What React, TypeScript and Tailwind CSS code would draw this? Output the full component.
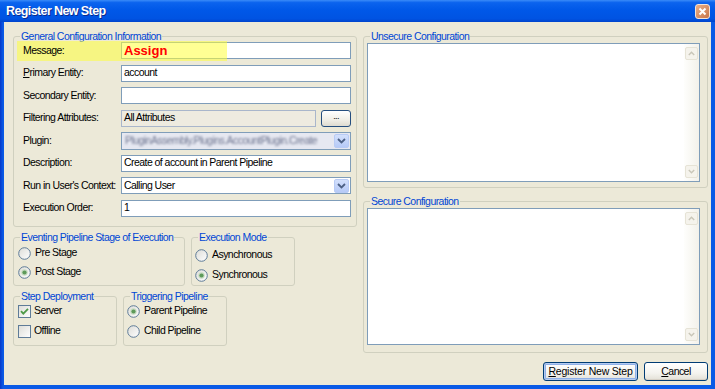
import React from "react";

const Radio = ({ checked }: { checked?: boolean }) => (
  <svg width="13" height="13" viewBox="0 0 13 13" className="shrink-0">
    <defs>
      <linearGradient id="rbg" x1="0" y1="0" x2="1" y2="1">
        <stop offset="0" stopColor="#DCDCD7" />
        <stop offset="1" stopColor="#FFFFFF" />
      </linearGradient>
    </defs>
    <circle cx="6.5" cy="6.5" r="5.8" fill="url(#rbg)" stroke="#5F7C98" strokeWidth="1" />
    {checked && (
      <>
        <circle cx="6.5" cy="6.5" r="3.2" fill="#C7DCC2" />
        <circle cx="6.5" cy="6.5" r="2.1" fill="#5E9A5A" />
      </>
    )}
  </svg>
);

const Check = ({ checked }: { checked?: boolean }) => (
  <svg width="13" height="13" viewBox="0 0 13 13" className="shrink-0">
    <defs>
      <linearGradient id="cbg" x1="0" y1="0" x2="1" y2="1">
        <stop offset="0" stopColor="#DCDCD7" />
        <stop offset="1" stopColor="#FFFFFF" />
      </linearGradient>
    </defs>
    <rect x="0.5" y="0.5" width="12" height="12" fill="url(#cbg)" stroke="#5F7C98" />
    {checked && (
      <path d="M3 6.2 L5.3 8.6 L10 3.8" fill="none" stroke="#4E9A48" strokeWidth="1.8" />
    )}
  </svg>
);

const DropBtn = () => (
  <div className="w-[15px] h-[14px] mr-[1px] rounded-[2px] border border-[#B8CBF5] bg-[linear-gradient(to_bottom,#D3E0FC,#B6CAF7)] flex items-center justify-center shrink-0">
    <svg width="9" height="6" viewBox="0 0 9 6">
      <path d="M1 1 L4.5 4.5 L8 1" fill="none" stroke="#4D6185" strokeWidth="1.8" />
    </svg>
  </div>
);

const ArrowBox = ({ up }: { up?: boolean }) => (
  <div className="w-[13px] h-[13px] rounded-[2px] border border-[#E6E3D6] bg-[#F5F3EC] flex items-center justify-center">
    <svg width="7" height="5" viewBox="0 0 7 5">
      <path d={up ? "M0.8 4 L3.5 1.2 L6.2 4" : "M0.8 1 L3.5 3.8 L6.2 1"} fill="none" stroke="#C9C6B8" strokeWidth="1.4" />
    </svg>
  </div>
);

const TextArea = ({ h }: { h: string }) => (
  <div className={`${h} w-[333px] border border-[#7F9DB9] bg-white flex justify-end`}>
    <div className="w-[15px] h-full flex flex-col justify-between items-center py-[3px] bg-[linear-gradient(to_right,#FEFEFC,#F3F1EA)]">
      <ArrowBox up />
      <ArrowBox />
    </div>
  </div>
);

const Group = ({
  title,
  className = "",
  inner = "",
  children,
}: {
  title: string;
  className?: string;
  inner?: string;
  children: React.ReactNode;
}) => (
  <fieldset className={`border border-[#D0D0BF] rounded-[3px] min-w-0 ${className}`}>
    <legend className="ml-[6px] px-[1px] text-[#0046D5] leading-[11px]">{title}</legend>
    <div className={inner}>{children}</div>
  </fieldset>
);

const Row = ({ label, children }: { label: React.ReactNode; children: React.ReactNode }) => (
  <div className="relative flex items-center h-[17px]">
    <div className="w-[98px] shrink-0 relative z-10">{label}</div>
    {children}
  </div>
);

const Box = ({ children, w = "w-[230px]" }: { children?: React.ReactNode; w?: string }) => (
  <div className={`${w} h-[17px] border border-[#7F9DB9] bg-white flex items-center px-[2px] whitespace-nowrap`}>
    {children}
  </div>
);

const Opt = ({ children, gap = "gap-[4px]" }: { children: React.ReactNode; gap?: string }) => (
  <div className={`flex items-center h-[16px] ${gap}`}>{children}</div>
);

const XPButton = ({ children, w, def }: { children: React.ReactNode; w: string; def?: boolean }) => (
  <div
    className={`${w} h-[19px] rounded-[3px] border border-[#003C74] flex items-center justify-center bg-[linear-gradient(to_bottom,#FFFFFF,#F4F3EE_60%,#E3E0D6)] ${
      def ? "shadow-[inset_0_0_0_1px_#B4CBF0,inset_0_0_0_2px_#8FB0E8]" : "shadow-[inset_0_-1px_0_#D6D0C5]"
    }`}
  >
    {children}
  </div>
);

export default function App() {
  return (
    <div className="w-[715px] h-[389px] flex flex-col bg-[#0A54E0] font-['Liberation_Sans',Arial,sans-serif] text-[10.5px] tracking-[-0.55px] text-black overflow-hidden">
      {/* Title bar */}
      <div className="h-[22px] shrink-0 flex items-center justify-between pl-[6px] pr-[5px] bg-[linear-gradient(to_bottom,#3A8BF8_0%,#0B63EE_12%,#0058E8_45%,#0053E2_85%,#0044CC_100%)]">
        <span className="text-white font-bold text-[12.5px] tracking-[-0.6px] [text-shadow:1px_1px_0_#0A2A8E]">
          Register New Step
        </span>
        <div className="w-[15px] h-[15px] rounded-[3px] border border-[#F4E3D6] bg-[linear-gradient(135deg,#E9AF88,#C9764A)] flex items-center justify-center">
          <svg width="9" height="9" viewBox="0 0 9 9">
            <path d="M1.5 1.5 L7.5 7.5 M7.5 1.5 L1.5 7.5" stroke="white" strokeWidth="2" />
          </svg>
        </div>
      </div>

      {/* Frame + client */}
      <div className="flex-1 flex pl-[4px] pr-[4px] pb-[4px] bg-[linear-gradient(to_right,#0838C8,#0A5AE6_3px,#0A5AE6)]">
        <div className="flex-1 bg-[#ECE9D8] flex pt-[9px] pl-[9px] pr-[3px] gap-[6px]">
          {/* Left column */}
          <div className="w-[344px] flex flex-col">
            <Group title="General Configuration Information" inner="pl-[9px] pr-[5px] pb-[9px] flex flex-col gap-[5.5px]">
              <Row label="Message:">
                <div className="absolute left-[-6px] top-[-1px] w-[210px] h-[20px] bg-[rgba(255,255,60,0.55)] pointer-events-none z-[5]" />
                <Box>
                  <span className="relative z-10 text-[#FF0000] font-bold text-[13px] tracking-[0px] leading-none">Assign</span>
                </Box>
              </Row>
              <Row
                label={
                  <span>
                    <span className="underline">P</span>rimary Entity:
                  </span>
                }
              >
                <Box>account</Box>
              </Row>
              <Row label="Secondary Entity:">
                <Box />
              </Row>
              <Row label="Filtering Attributes:">
                <div className="w-[196px] h-[17px] border border-[#A9B6CB] bg-[#EEEBE0] flex items-center px-[2px]">
                  All Attributes
                </div>
                <div className="ml-[5px] w-[30px] h-[17px] rounded-[3px] border border-[#254E7F] bg-[linear-gradient(to_bottom,#FFFFFF,#F0EEE6_60%,#DEDBD0)] flex items-center justify-center text-[9px] leading-none pb-[3px]">
                  ...
                </div>
              </Row>
              <Row label="Plugin:">
                <div className="w-[230px] h-[18px] border border-[#7F9DB9] bg-[#E6E8F1] flex items-center overflow-hidden">
                  <span className="flex-1 px-[3px] whitespace-nowrap overflow-hidden text-[#6E7590] blur-[1.3px]">
                    PluginAssembly.Plugins.AccountPlugin.Create
                  </span>
                  <DropBtn />
                </div>
              </Row>
              <Row label="Description:">
                <Box>Create of account in Parent Pipeline</Box>
              </Row>
              <Row label="Run in User's Context:">
                <div className="w-[230px] h-[17px] border border-[#7F9DB9] bg-white flex items-center">
                  <span className="flex-1 px-[2px]">Calling User</span>
                  <DropBtn />
                </div>
              </Row>
              <Row label="Execution Order:">
                <Box w="w-[232px]">1</Box>
              </Row>
            </Group>

            <div className="flex gap-[6px] mt-[5px]">
              <Group title="Eventing Pipeline Stage of Execution" className="w-[172px]" inner="pl-[4px] pt-[2.5px] pb-[5px] flex flex-col gap-[3px]">
                <Opt>
                  <Radio />
                  Pre Stage
                </Opt>
                <Opt>
                  <Radio checked />
                  Post Stage
                </Opt>
              </Group>
              <Group title="Execution Mode" className="w-[104px]" inner="pl-[3px] pt-[4.5px] flex flex-col gap-[4px]">
                <Opt>
                  <Radio />
                  Asynchronous
                </Opt>
                <Opt>
                  <Radio checked />
                  Synchronous
                </Opt>
              </Group>
            </div>

            <div className="flex gap-[6px] mt-[5px]">
              <Group title="Step Deployment" className="w-[104px]" inner="pl-[4px] pt-[1px] pb-[6px] flex flex-col gap-[4px]">
                <Opt gap="gap-[3px]">
                  <Check checked />
                  Server
                </Opt>
                <Opt gap="gap-[3px]">
                  <Check />
                  Offline
                </Opt>
              </Group>
              <Group title="Triggering Pipeline" className="w-[104px]" inner="pl-[3px] pt-[1px] pb-[6px] flex flex-col gap-[4px]">
                <Opt>
                  <Radio checked />
                  Parent Pipeline
                </Opt>
                <Opt>
                  <Radio />
                  Child Pipeline
                </Opt>
              </Group>
            </div>
          </div>

          {/* Right column */}
          <div className="w-[345px] flex flex-col">
            <Group title="Unsecure Configuration" inner="pl-[3px] pt-[1px] pb-[5px]">
              <TextArea h="h-[139px]" />
            </Group>
            <Group title="Secure Configuration" className="mt-[7.5px]" inner="pl-[3px] pt-[1.5px] pb-[7px]">
              <TextArea h="h-[137px]" />
            </Group>
            <div className="mt-[9px] flex justify-end gap-[6px]">
              <XPButton w="w-[95px]" def>
                <span className="tracking-[-0.2px]">
                  <span className="underline">R</span>egister New Step
                </span>
              </XPButton>
              <XPButton w="w-[64px]">
                <span>
                  <span className="underline">C</span>ancel
                </span>
              </XPButton>
            </div>
          </div>
        </div>
      </div>
    </div>
  );
}
